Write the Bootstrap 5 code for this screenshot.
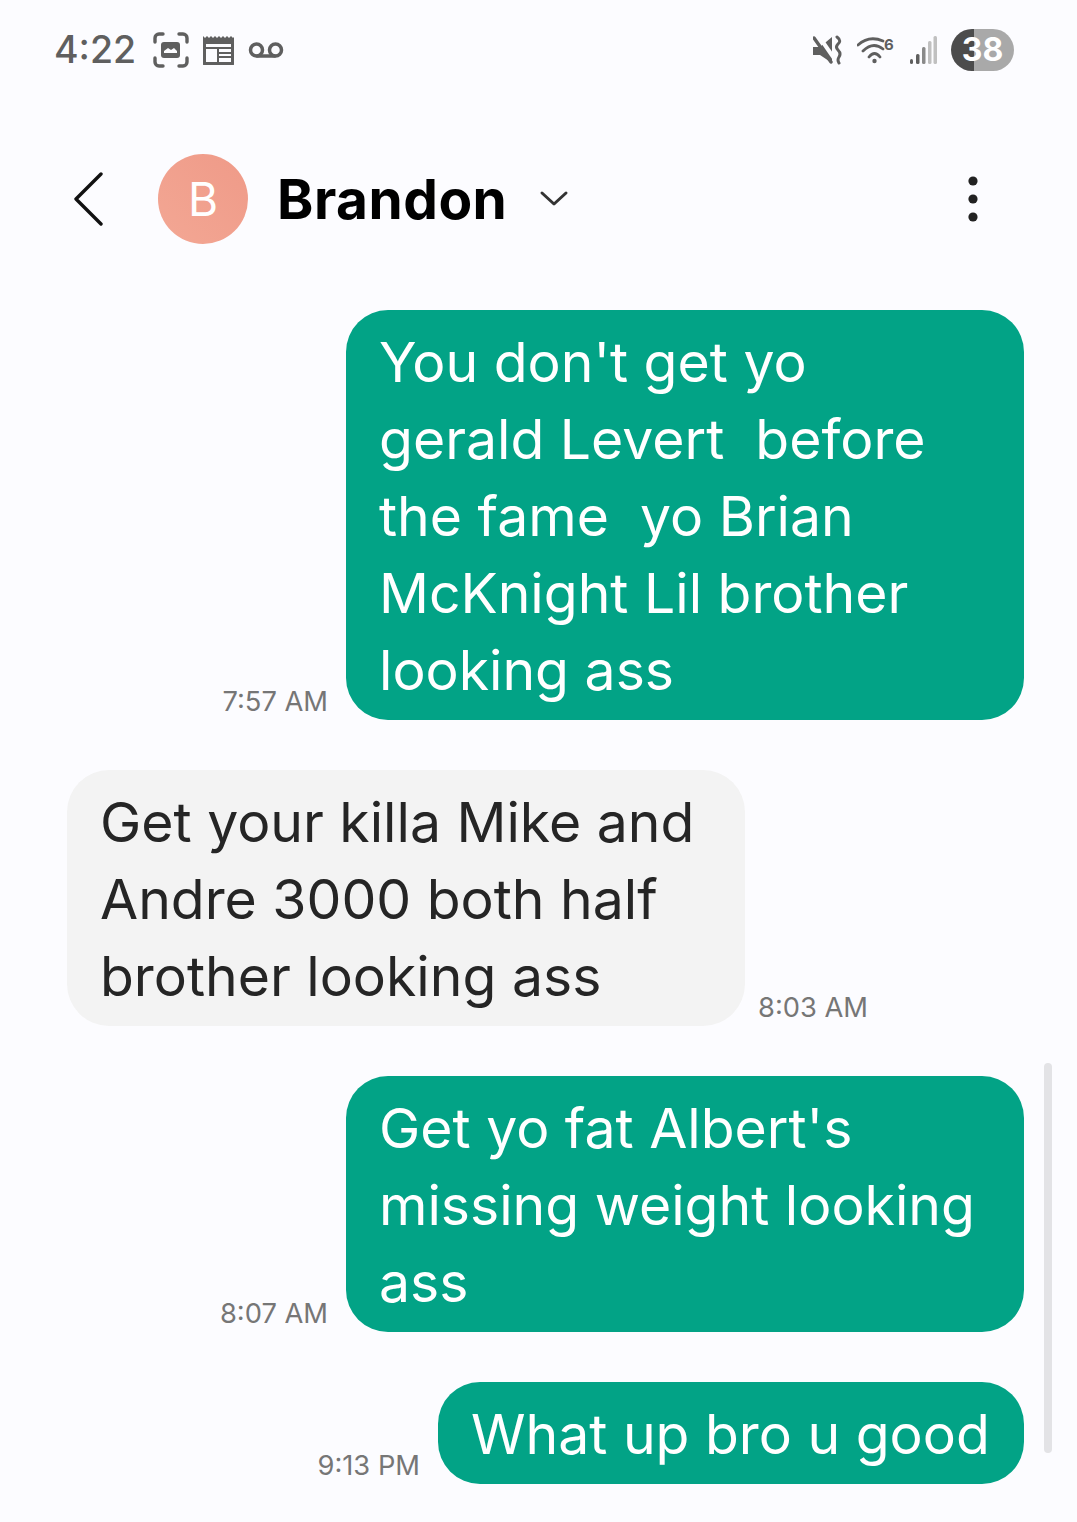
<!DOCTYPE html>
<html lang="en">
<head>
    <meta charset="UTF-8" />
    <meta name="viewport" content="width=device-width, initial-scale=1.0" />
    <title>Brandon</title>
    <link href="https://cdn.jsdelivr.net/npm/bootstrap@5.3.0/dist/css/bootstrap.min.css" rel="stylesheet" />
    <style>
        html, body {
            height: 100%;
        }

        body {
            background: #fcfcff;
            font-family: "Inter", "Liberation Sans", sans-serif;
            overflow: hidden;
            position: relative;
        }

        .status-bar {
            height: 100px;
            padding: 0 63px 0 54px;
            color: #5f5f5f;
        }

        .status-time {
            font-size: 37.5px;
            font-weight: 500;
            line-height: 1;
            margin-right: 17px;
        }

        .status-left {
            gap: 13px;
        }

        .status-right {
            gap: 14px;
        }

        .wifi-icon {
            margin-right: -4px;
        }

        .battery-pill {
            width: 63px;
            height: 42px;
            border-radius: 21px;
            background: linear-gradient(to right, #4c4c4c 0, #4c4c4c 37%, #a9a9a9 37%, #a9a9a9 100%);
            color: #fff;
            font-size: 32px;
            font-weight: 700;
            line-height: 42px;
            text-align: center;
        }

        .chat-head {
            height: 198px;
            padding: 0 0 0 73px;
            margin-bottom: 12px;
        }

        .avatar {
            width: 90px;
            height: 90px;
            background: linear-gradient(45deg, #f3a794, #ef9a88);
            color: #fff;
            font-size: 46px;
            line-height: 90px;
            text-align: center;
            margin: 0 29px 0 55px;
        }

        .contact-name {
            font-size: 55px;
            font-weight: 700;
            color: #000;
            letter-spacing: 0.5px;
            line-height: 1;
            margin-right: 32px;
        }

        .menu-dots {
            margin-left: auto;
            margin-right: 99px;
        }

        .thread {
            padding: 0 53px 0 67px;
            gap: 50px;
        }

        .bubble {
            width: 678px;
            border-radius: 42px;
            padding: 13px 33px 12px;
            font-size: 55.3px;
            line-height: 77px;
            white-space: pre-wrap;
        }

        .bubble-out {
            background: #02a386;
            color: #fff;
        }

        .bubble-in {
            background: #f3f3f3;
            color: #252525;
        }

        .bubble-short {
            width: 586px;
        }

        .stamp {
            font-size: 27.3px;
            line-height: 1;
            color: #767676;
            padding-bottom: 5px;
        }

        .gap-out {
            gap: 18px;
        }

        .gap-in {
            gap: 13px;
        }

        .scroll-thumb {
            position: absolute;
            left: 1044px;
            top: 1063px;
            width: 8px;
            height: 390px;
            border-radius: 4px;
            background: #e3e3e6;
        }
    </style>
</head>
<body>
    <div class="status-bar d-flex align-items-center">
        <span class="status-time">4:22</span>
        <div class="status-left d-flex align-items-center">
            <svg width="36" height="36" viewBox="0 0 36 36" fill="none" stroke="#5f5f5f" stroke-width="3.4" stroke-linecap="round">
                <path d="M2 10V6a4 4 0 0 1 4-4h4M26 2h4a4 4 0 0 1 4 4v4M34 26v4a4 4 0 0 1-4 4h-4M10 34H6a4 4 0 0 1-4-4v-4" />
                <rect x="8" y="10" width="19" height="16" rx="3" fill="#5f5f5f" stroke="none" />
                <path d="M11 19l4-3 3 2 3-2 3 3v2H11z" fill="#fcfcff" stroke="none" />
            </svg>
            <svg width="33" height="30" viewBox="0 0 33 30">
                <path d="M1 1l2 2 2-2 2 2 2-2 2 2 2-2 2 2 2-2 2 2 2-2 2 2 2-2 2 2 2-2 2 2 1-1v27a2 2 0 0 1-2 2H3a2 2 0 0 1-2-2z" fill="#5f5f5f" />
                <rect x="4" y="9" width="25" height="18" fill="#fcfcff" />
                <path d="M4 12h25v2H4zM15 12h2v15h-2zM17 17h12v2H17zM17 21h12v2H17z" fill="#5f5f5f" />
            </svg>
            <svg width="36" height="16" viewBox="0 0 36 16" fill="none" stroke="#5f5f5f" stroke-width="3.5">
                <circle cx="8.5" cy="8" r="6" />
                <circle cx="27.5" cy="8" r="6" />
                <path d="M8.5 14h19" />
            </svg>
        </div>
        <div class="status-right ms-auto d-flex align-items-center">
            <svg width="30" height="30" viewBox="0 0 30 30">
                <path d="M0 12h7L19 2v26L7 20H0z" fill="#5f5f5f" />
                <path d="M5 0l18 26" stroke="#fcfcff" stroke-width="4" />
                <path d="M1 3l17 24" stroke="#5f5f5f" stroke-width="3.4" stroke-linecap="round" />
                <path d="M24 2c4 3 3 5 1 7s-2 4 0 6 3 4 1 7-1 4 0 6" fill="none" stroke="#5f5f5f" stroke-width="3" stroke-linecap="round" />
            </svg>
            <svg class="wifi-icon" width="42" height="32" viewBox="0 -2 42 32" fill="none" stroke="#5f5f5f" stroke-width="2.8" stroke-linecap="round">
                <path d="M1 9Q12-1 26 5M6 15Q16 5 26 13M12 21Q17.5 14 23 21" />
                <circle cx="17.5" cy="25" r="2.2" fill="#5f5f5f" stroke="none" />
                <text x="27" y="14" font-size="15" font-weight="700" fill="#5f5f5f" stroke="none" font-family="Inter, sans-serif">6</text>
            </svg>
            <svg width="28" height="30" viewBox="0 0 28 30">
                <rect x="1" y="24" width="3" height="5" rx="1.5" fill="#5f5f5f" />
                <rect x="7" y="19" width="3.5" height="10" rx="1.5" fill="#5f5f5f" />
                <rect x="13" y="12" width="3.5" height="17" rx="1.5" fill="#8a8a8a" />
                <rect x="19" y="6" width="3.5" height="23" rx="1.5" fill="#c0c0c0" />
                <rect x="24.5" y="1" width="3.5" height="28" rx="1.5" fill="#c0c0c0" />
            </svg>
            <div class="battery-pill rounded-pill">38</div>
        </div>
    </div>

    <div class="chat-head d-flex align-items-center">
        <svg width="30" height="54" viewBox="0 0 30 54" fill="none" stroke="#111" stroke-width="3.4" stroke-linecap="round" stroke-linejoin="round">
            <path d="M28 2L3 27l25 25" />
        </svg>
        <div class="avatar rounded-circle flex-shrink-0">B</div>
        <span class="contact-name">Brandon</span>
        <svg width="30" height="18" viewBox="0 0 30 18" fill="none" stroke="#333" stroke-width="3" stroke-linecap="round" stroke-linejoin="round">
            <path d="M3 3l12 11L27 3" />
        </svg>
        <svg class="menu-dots" width="10" height="46" viewBox="0 0 10 46" fill="#222">
            <circle cx="5" cy="5" r="4.6" />
            <circle cx="5" cy="23" r="4.6" />
            <circle cx="5" cy="41" r="4.6" />
        </svg>
    </div>

    <div class="thread d-flex flex-column">
        <div class="d-flex justify-content-end align-items-end gap-out">
            <span class="stamp">7:57 AM</span>
            <div class="bubble bubble-out">You don't get yo
gerald Levert  before
the fame  yo Brian
McKnight Lil brother
looking ass</div>
        </div>
        <div class="d-flex align-items-end gap-in">
            <div class="bubble bubble-in">Get your killa Mike and
Andre 3000 both half
brother looking ass</div>
            <span class="stamp">8:03 AM</span>
        </div>
        <div class="d-flex justify-content-end align-items-end gap-out">
            <span class="stamp">8:07 AM</span>
            <div class="bubble bubble-out">Get yo fat Albert's
missing weight looking
ass</div>
        </div>
        <div class="d-flex justify-content-end align-items-end gap-out">
            <span class="stamp">9:13 PM</span>
            <div class="bubble bubble-out bubble-short">What up bro u good</div>
        </div>
    </div>

    <div class="scroll-thumb"></div>

    <script src="https://cdn.jsdelivr.net/npm/bootstrap@5.3.0/dist/js/bootstrap.bundle.min.js"></script>
</body>
</html>
